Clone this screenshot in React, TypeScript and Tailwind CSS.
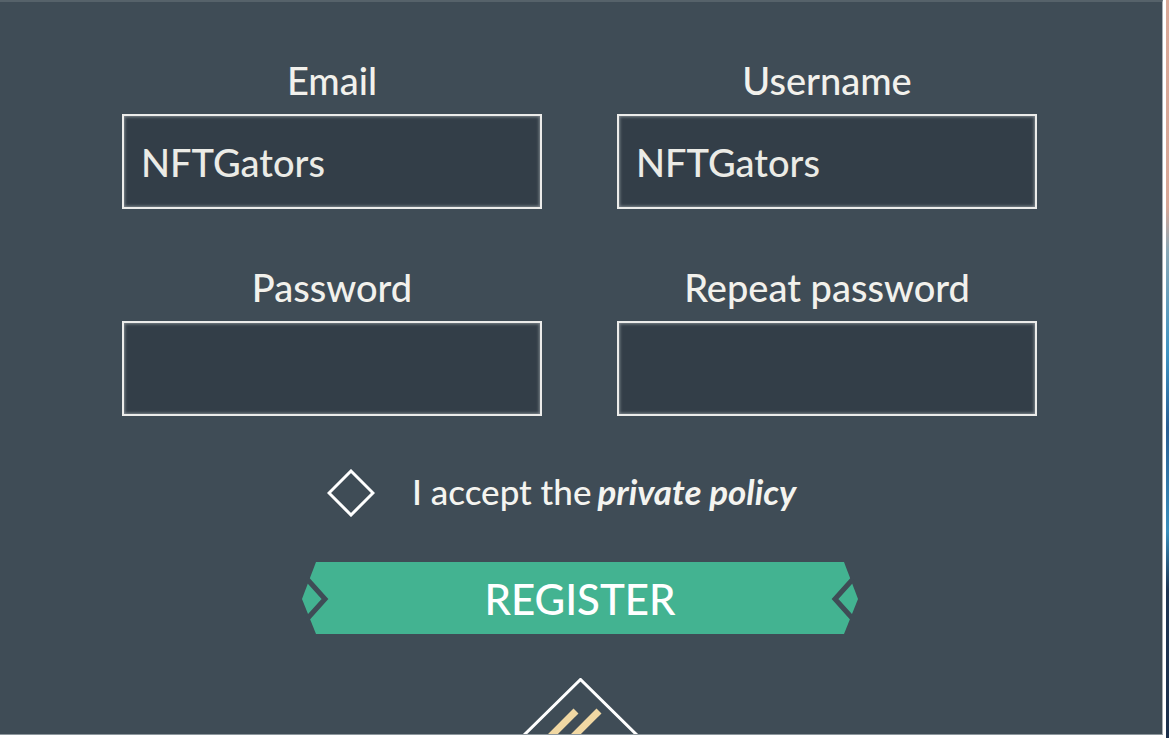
import React from "react";

function Field({ label, value }: { label: string; value?: string }) {
  return (
    <div className="flex flex-col">
      <label className="text-center text-[38px] leading-[44px] font-medium text-[#f2f1ec]">{label}</label>
      <div className="mt-[12px] h-[95px] w-[420px] border-2 border-[#ececea] bg-[#333e48] shadow-[inset_0_0_3px_1px_rgba(190,195,198,0.55)] flex items-center pl-[17px]">
        <span className="text-[38px] leading-none font-medium text-[#ebebe6]">{value}</span>
      </div>
    </div>
  );
}

function RegisterButton() {
  return (
    <button className="relative ml-[301px] mt-[45px] h-[72px] w-[558px] flex items-center justify-center">
      <svg className="absolute inset-0" width="558" height="72" viewBox="0 0 558 72">
        <polygon points="1,37 15,0 543,0 557,37 543,72 15,72" fill="#43b391" />
        <polyline points="6,17 24,37 6,57" fill="none" stroke="#3f4c56" strokeWidth="5" />
        <polyline points="552,17 534,37 552,57" fill="none" stroke="#3f4c56" strokeWidth="5" />
      </svg>
      <span className="relative pt-[6px] text-[42px] leading-none font-medium text-white">REGISTER</span>
    </button>
  );
}

export default function App() {
  return (
    <div className="flex h-[738px] w-[1169px] bg-white font-['Lato',sans-serif]">
      <div className="flex h-[735px] w-[1163px] flex-col border-t-2 border-r border-b border-t-[#56626a] border-r-[#a7aeb3] border-b-[#8d979d] bg-[#3f4c56] overflow-hidden">
        <div className="ml-[122px] mt-[56px] grid grid-cols-[420px_420px] gap-x-[75px] gap-y-[56px]">
          <Field label="Email" value="NFTGators" />
          <Field label="Username" value="NFTGators" />
          <Field label="Password" />
          <Field label="Repeat password" />
        </div>

        <div className="ml-[327px] mt-[53px] flex items-center">
          <svg width="48" height="48" viewBox="0 0 48 48">
            <polygon points="24,2 46,24 24,46 2,24" fill="none" stroke="#ffffff" strokeWidth="3" />
          </svg>
          <span className="ml-[37px] pb-[4px] text-[35px] leading-none font-medium text-[#f4f4f0]">
            I accept the
            <em className="ml-[6px] font-bold italic">private policy</em>
          </span>
        </div>

        <RegisterButton />

        <div className="ml-[520px] mt-[49px] h-[60px] w-[120px] overflow-hidden">
          <svg width="120" height="60" viewBox="0 0 120 60">
            <polyline points="-2,63 60.5,1.5 123,63" fill="none" stroke="#ffffff" strokeWidth="3" />
            <line x1="56" y1="33" x2="30" y2="59" stroke="#f1d8a3" strokeWidth="7" />
            <line x1="79" y1="33" x2="53" y2="59" stroke="#f1d8a3" strokeWidth="7" />
          </svg>
        </div>
      </div>
      <div className="w-[3px] h-[736px] bg-white" />
      <div className="w-[3px] h-[738px] bg-[linear-gradient(to_bottom,#d9a898_0%,#d7a696_28%,#8aa8b6_34%,#3f93c2_48%,#2b5f93_58%,#3b8fbc_72%,#1f3552_80%,#1c2f4a_100%)]" />
    </div>
  );
}
